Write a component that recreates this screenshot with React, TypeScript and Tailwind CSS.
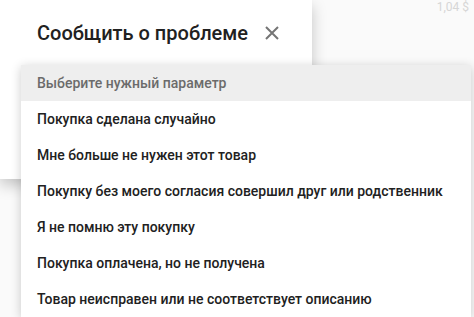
const options = [
  'Покупка сделана случайно',
  'Мне больше не нужен этот товар',
  'Покупку без моего согласия совершил друг или родственник',
  'Я не помню эту покупку',
  'Покупка оплачена, но не получена',
  'Товар неисправен или не соответствует описанию',
];

function CloseIcon() {
  return (
    <svg width="14" height="14" viewBox="0 0 14 14" className="text-[#757575]">
      <path d="M1 1L13 13M13 1L1 13" stroke="currentColor" strokeWidth="2" />
    </svg>
  );
}

export default function App() {
  return (
    <div className="relative w-[474px] h-[317px] overflow-hidden bg-[#fafafa] font-['Roboto',sans-serif]">
      <div className="absolute right-[5px] top-0 text-[12px] leading-[14px] text-[#d6d6d6]">1,04 $</div>

      <div className="absolute left-0 top-0 w-[312px] h-[179px] bg-white shadow-[0_6px_14px_rgba(0,0,0,0.22)]">
        <div className="flex items-center pl-[37px] pt-[19px] h-[47px]">
          <h2 className="text-[20px] leading-[28px] font-medium text-[#212121]">Сообщить о проблеме</h2>
          <button className="ml-[17px] flex items-center justify-center">
            <CloseIcon />
          </button>
        </div>
      </div>

      <div className="absolute left-[21px] top-[65px] w-[450px] bg-white shadow-[0_2px_10px_rgba(0,0,0,0.2)]">
        <div className="h-[36px] flex items-center px-[16px] bg-[#eeeeee] text-[14px] font-medium text-[#6b6b6b]">
          Выберите нужный параметр
        </div>
        {options.map((o) => (
          <div key={o} className="h-[36px] flex items-center px-[16px] text-[14px] font-medium text-[#212121]">
            {o}
          </div>
        ))}
      </div>
    </div>
  );
}
